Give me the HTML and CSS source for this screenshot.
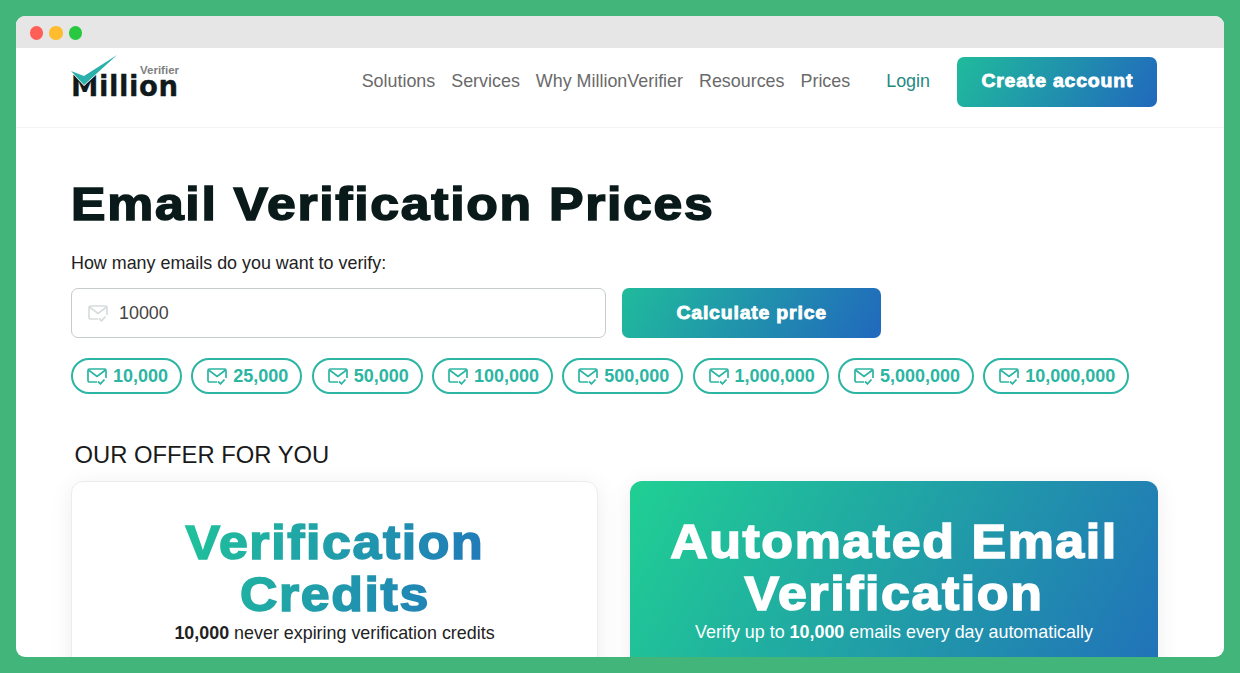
FILE: index.html
```html
<!DOCTYPE html>
<html lang="en">
<head>
<meta charset="utf-8">
<title>Email Verification Prices</title>
<link rel="stylesheet" href="styles.css">
</head>
<body>
<svg class="defs" width="0" height="0" aria-hidden="true">
  <symbol id="mail" viewBox="0 0 20 17">
    <path d="M10 14H2.500A1.500 1.500 0 0 1 1 12.500V2.500A1.500 1.500 0 0 1 2.500 1h15A1.500 1.500 0 0 1 19 2.500V10" fill="none" stroke="currentColor" stroke-width="1.700"/>
    <path d="M1.500 2l8.500 6.500L18.500 2" fill="none" stroke="currentColor" stroke-width="1.700"/>
    <path d="M11 13.500l2.500 2.300 4-4.300" fill="none" stroke="currentColor" stroke-width="1.800"/>
  </symbol>
  <defs>
    <linearGradient id="credits" gradientUnits="userSpaceOnUse" x1="0" y1="0" x2="310" y2="100">
      <stop offset="0" stop-color="#1fc898"/>
      <stop offset="1" stop-color="#2172bd"/>
    </linearGradient>
  </defs>
</svg>
<div class="window">
  <div class="titlebar">
    <span class="dot red"></span><span class="dot yellow"></span><span class="dot green"></span>
  </div>
  <header class="header">
    <a class="logo">
      <span class="logo-sub">Verifier</span>
      <span class="logo-main">Million</span>
      <svg class="logo-check" width="48" height="33" viewBox="0 0 48 33"><path d="M0 17l13 5L46 1 13 31z" fill="#2cb0ac" stroke="#fff" stroke-width="1.500" paint-order="stroke"/></svg>
    </a>
    <nav class="nav">
      <a>Solutions</a><a>Services</a><a>Why MillionVerifier</a><a>Resources</a><a>Prices</a>
    </nav>
    <a class="login">Login</a>
    <a class="btn btn-create"><span class="btn-label">Create account</span></a>
  </header>
  <main class="main">
    <h1 class="title">Email Verification Prices</h1>
    <label class="prompt">How many emails do you want to verify:</label>
    <div class="calc">
      <div class="field">
        <svg class="field-icon"><use href="#mail"/></svg>
        <span>10000</span>
      </div>
      <a class="btn btn-calc"><span class="btn-label">Calculate price</span></a>
    </div>
    <div class="chips">
      <a class="chip"><svg class="chip-icon"><use href="#mail"/></svg>10,000</a>
      <a class="chip"><svg class="chip-icon"><use href="#mail"/></svg>25,000</a>
      <a class="chip"><svg class="chip-icon"><use href="#mail"/></svg>50,000</a>
      <a class="chip"><svg class="chip-icon"><use href="#mail"/></svg>100,000</a>
      <a class="chip"><svg class="chip-icon"><use href="#mail"/></svg>500,000</a>
      <a class="chip"><svg class="chip-icon"><use href="#mail"/></svg>1,000,000</a>
      <a class="chip"><svg class="chip-icon"><use href="#mail"/></svg>5,000,000</a>
      <a class="chip"><svg class="chip-icon"><use href="#mail"/></svg>10,000,000</a>
    </div>
    <h2 class="offer">OUR OFFER FOR YOU</h2>
    <div class="cards">
      <section class="card card-light">
        <h3 class="card-heading">
          <svg class="gradient-title" width="320" height="104" viewBox="0 0 320 104">
            <text x="160" y="42" text-anchor="middle">Verification</text>
            <text x="160" y="94" text-anchor="middle">Credits</text>
          </svg>
        </h3>
        <p class="card-text"><b>10,000</b> never expiring verification credits</p>
      </section>
      <section class="card card-dark">
        <h3 class="card-title">Automated Email Verification</h3>
        <p class="card-text">Verify up to <b>10,000</b> emails every day automatically</p>
      </section>
    </div>
  </main>
</div>
</body>
</html>
```
FILE: styles.css
```css
* { box-sizing: border-box; }
html, body { height: 100%; }
body {
  margin: 0;
  padding: 16px;
  background: #41b57a;
  font-family: "Liberation Sans", Arial, sans-serif;
  color: #111;
  overflow: hidden;
}
.defs { position: absolute; }
.window {
  height: 641px;
  background: #fff;
  border-radius: 9px;
  overflow: hidden;
}
.titlebar {
  height: 32px;
  background: #e6e6e6;
  display: flex;
  align-items: center;
  gap: 6.200px;
  padding: 2px 0 0 14px;
}
.dot { width: 13.300px; height: 13.300px; border-radius: 50%; }
.red { background: #ff5f57; }
.yellow { background: #febc2e; }
.green { background: #28c840; }
.header {
  height: 80px;
  display: flex;
  align-items: center;
  padding: 0 67px 12px 55px;
  border-bottom: 1px solid #f3f3f3;
}
.logo {
  position: relative;
  display: block;
  width: 108px;
  height: 45px;
  margin-right: auto;
}
.logo-main {
  position: absolute;
  left: 0;
  bottom: 7px;
  font-family: "DejaVu Sans", sans-serif;
  font-size: 27.500px;
  line-height: 22px;
  font-weight: 700;
  letter-spacing: .6px;
  color: #10191c;
  -webkit-text-stroke: .3px #10191c;
}
.logo-sub {
  position: absolute;
  right: 0;
  top: 6px;
  font-size: 11.500px;
  line-height: 11px;
  font-weight: 700;
  color: #7c7f80;
}
.logo-check { position: absolute; left: 0; top: -5px; }
.nav {
  display: flex;
  gap: 16px;
  font-size: 17.900px;
  color: #6a6a6a;
  margin-right: 36px;
}
.login { font-size: 17.900px; color: #1f8a84; margin-right: 27px; }
.btn {
  display: flex;
  align-items: center;
  justify-content: center;
  height: 50px;
  border-radius: 7px;
  color: #fff;
  font-weight: 700;
  font-size: 18px;
  letter-spacing: .75px;
  -webkit-text-stroke: .8px #fff;
  background: linear-gradient(120deg, #20bb9c, #2168bd);
}
.btn-label { display: inline-block; transform: scaleX(1.08); white-space: nowrap; }
.btn-create { width: 200px; }
.main { padding: 48px 67px 0 55px; }
.title {
  display: inline-block;
  margin: 0;
  font-size: 47px;
  line-height: 56px;
  font-weight: 700;
  letter-spacing: 1.560px;
  color: #0a1a1a;
  -webkit-text-stroke: 1.600px #0a1a1a;
  transform: scaleX(1.1);
  transform-origin: left center;
}
.prompt {
  display: block;
  margin-top: 19px;
  font-size: 17.900px;
  line-height: 24px;
  color: #222;
}
.calc { display: flex; gap: 16px; margin-top: 13px; }
.field {
  width: 535px;
  height: 50px;
  display: flex;
  align-items: center;
  gap: 11px;
  padding-left: 16px;
  border: 1px solid #c6cbcb;
  border-radius: 7px;
  font-size: 17.900px;
  color: #444;
}
.field-icon { width: 20px; height: 17px; color: #d6dcdc; }
.btn-calc { width: 259px; }
.chips { display: flex; gap: 9.250px; margin-top: 20px; }
.chip {
  display: flex;
  align-items: center;
  gap: 6px;
  height: 36px;
  padding: 0 12px 0 14px;
  border: 2px solid #2cb5a3;
  border-radius: 18px;
  color: #2cb5a3;
  font-size: 18px;
  font-weight: 700;
}
.chip-icon { width: 20px; height: 17px; }
.offer {
  margin: 45px 0 0 3.500px;
  font-size: 23.800px;
  line-height: 32px;
  font-weight: 400;
  color: #1a1a1a;
}
.cards {
  display: grid;
  grid-template-columns: 527px 528px;
  gap: 32px;
  margin-top: 10px;
}
.card {
  height: 300px;
  border-radius: 12px;
  padding: 35px 20px 0;
  text-align: center;
  box-shadow: 0 4px 24px rgba(0, 0, 0, .07);
}
.card-light { border: 1px solid #ececec; background: #fff; }
.card-dark {
  color: #fff;
  background: linear-gradient(120deg, #20d093, #2168bd);
}
.card-heading { margin: 0; height: 104px; }
.card-title {
  margin: 0;
  font-size: 48px;
  line-height: 52px;
  font-weight: 700;
  letter-spacing: 1.500px;
  -webkit-text-stroke: 1.600px currentColor;
  transform: scaleX(1.08);
  padding: 0 20px;
}
.gradient-title {
  display: block;
  margin: 0 auto;
  overflow: visible;
  transform: scaleX(1.08);
}
.gradient-title text {
  font-family: "Liberation Sans", Arial, sans-serif;
  font-size: 48px;
  font-weight: 700;
  letter-spacing: 1.500px;
  fill: url(#credits);
  stroke: url(#credits);
  stroke-width: 1.600px;
}
.card-text { margin: 0; font-size: 17.900px; line-height: 24px; }
.card-light .card-text { color: #222; }
```
